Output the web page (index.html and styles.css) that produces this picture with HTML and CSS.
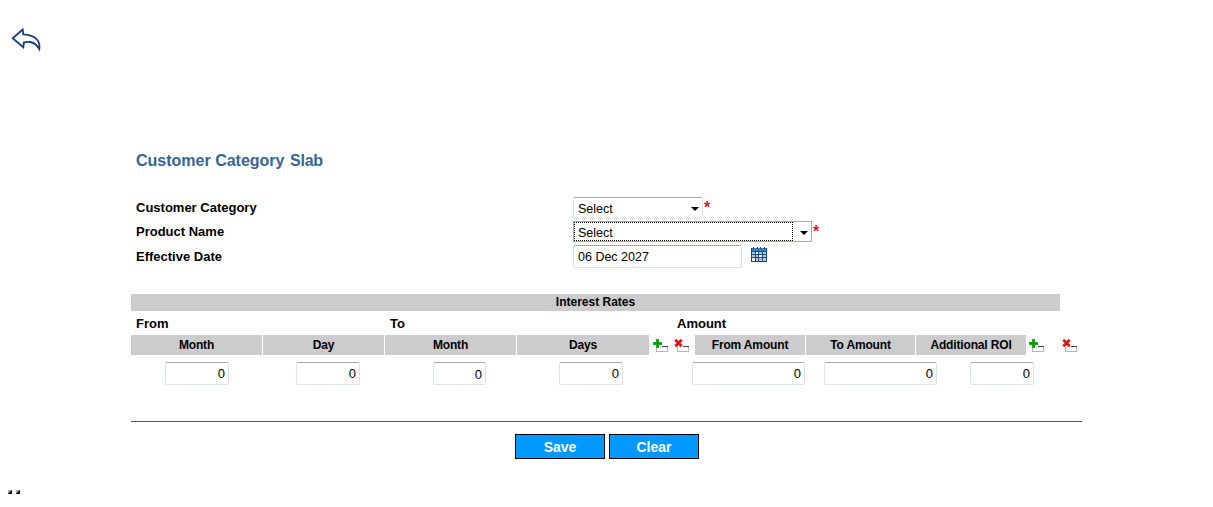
FILE: index.html
```html
<!DOCTYPE html>
<html lang="en">
<head>
  <meta charset="UTF-8" />
  <title>Customer Category Slab</title>
  <link rel="stylesheet" href="styles.css">
</head>
<body>
  <a class="back" href="#">
    <svg width="32" height="26" viewBox="0 0 32 26">
      <path d="M2.7 11.3 L12.7 2.5 L13.3 7.3 C19 7.6 24 9 27 12.5 C29.3 15 29.8 18.500 29.3 22 C27 18 24 15.500 20 15 C18 14.800 16 15 14 15.300 L13.300 20.300 Z" fill="#fff" stroke="#1b3a84" stroke-width="1.8" stroke-linejoin="miter"/>
    </svg>
  </a>

  <h2 class="title">Customer Category <span class="title-last">Slab</span></h2>

  <form class="details">
    <label class="field-label label-up">Customer Category</label>
    <div class="field">
      <div class="select-box select-short">
        <select class="select"><option>Select</option></select>
      </div>
      <span class="req">*</span>
    </div>

    <label class="field-label">Product Name</label>
    <div class="field">
      <div class="select-box select-long">
        <select class="select select-focus"><option>Select</option></select>
      </div>
      <span class="req">*</span>
    </div>

    <label class="field-label">Effective Date</label>
    <div class="field">
      <input class="input date" type="text" value="06 Dec 2027" />
      <svg class="cal" width="16" height="15" viewBox="0 0 16 15" shape-rendering="crispEdges">
        <rect x="0" y="1" width="16" height="14" fill="#1d4a7c"/>
        <rect x="1" y="1" width="14" height="3" fill="#3f7fc4"/>
        <path d="M2 0h1v2h-1z M6 0h1v2h-1z M9 0h1v2h-1z M13 0h1v2h-1z" fill="#1d4a7c"/>
        <path d="M1 5h3v2h-3z M5 5h2v2h-2z M8 5h3v2h-3z M12 5h3v2h-3z M1 8h3v2h-3z M5 8h2v2h-2z M8 8h3v2h-3z M12 8h3v2h-3z M1 11h3v3h-3z M5 11h2v3h-2z M8 11h3v3h-3z M12 11h3v3h-3z" fill="#a9cdf0"/>
        <path d="M5 5h2v2h-2z M8 8h3v2h-3z M1 11h3v3h-3z" fill="#fff"/>
      </svg>
    </div>
  </form>

  <section class="rates">
    <div class="band">Interest Rates</div>

    <div class="groups">
      <span class="group group-from">From</span>
      <span class="group group-to">To</span>
      <span class="group">Amount</span>
    </div>

    <div class="heads">
      <div class="head head-month">Month</div>
      <div class="head head-day">Day</div>
      <div class="head head-month">Month</div>
      <div class="head head-days">Days</div>
      <div class="tools tools-left">
        <svg class="tool" width="16" height="14" viewBox="0 0 16 14" shape-rendering="crispEdges"><use href="#tool-add"/></svg>
        <svg class="tool" width="16" height="14" viewBox="0 0 16 14" shape-rendering="crispEdges"><use href="#tool-del"/></svg>
      </div>
      <div class="head head-from">From Amount</div>
      <div class="head head-toamt">To Amount</div>
      <div class="head head-roi">Additional ROI</div>
      <div class="tools tools-right">
        <svg class="tool" width="16" height="14" viewBox="0 0 16 14" shape-rendering="crispEdges"><use href="#tool-add"/></svg>
        <svg class="tool" width="16" height="14" viewBox="0 0 16 14" shape-rendering="crispEdges"><use href="#tool-del"/></svg>
      </div>
    </div>

    <div class="values">
      <input class="input num num-a" type="text" value="0" />
      <input class="input num num-b" type="text" value="0" />
      <input class="input num num-c" type="text" value="0" />
      <input class="input num num-d" type="text" value="0" />
      <input class="input num num-e" type="text" value="0" />
      <input class="input num num-f" type="text" value="0" />
      <input class="input num num-g" type="text" value="0" />
    </div>
  </section>

  <hr class="rule" />

  <div class="actions">
    <button class="btn" type="button">Save</button>
    <button class="btn" type="button">Clear</button>
  </div>

  <div class="dots"><i class="dot"></i><i class="dot"></i></div>

  <svg width="0" height="0" class="defs">
    <g id="tool-box">
      <path d="M3 8h1v4h-1z M3 12h12v1h-12z M14 8h1v4h-1z" fill="#b5b5b5"/>
      <path d="M9 7h6v1h-6z" fill="#444"/>
    </g>
    <g id="tool-add">
      <use href="#tool-box"/>
      <path d="M3 0h3v3h3v3h-3v3h-3v-3h-3v-3h3z" fill="#1fae1f"/>
      <path d="M4 1h1v7h-1z M1 4h7v1h-7z" fill="#0f7f0f"/>
    </g>
    <g id="tool-del">
      <use href="#tool-box"/>
      <path d="M1.300 0.800L7.700 7.200M7.700 0.800L1.300 7.200" stroke="#e01414" stroke-width="2.800" fill="none" shape-rendering="geometricPrecision"/>
    </g>
  </svg>
</body>
</html>
```

FILE: styles.css
```css
body {
  margin: 0;
  height: 507px;
  overflow: hidden;
  background: #fff;
  color: #000;
  font-family: "Liberation Sans", Arial, sans-serif;
  font-size: 12px;
}
.back {
  display: block;
  width: 32px;
  height: 26px;
  margin: 27px 0 0 10px;
}
.back svg {
  display: block;
}
.title {
  margin: 99px 0 0 136px;
  font-size: 16px;
  line-height: 17px;
  font-weight: bold;
  color: #336699;
}
.title-last {
  margin-left: 1px;
  letter-spacing: -0.2px;
}
.details {
  display: grid;
  grid-template-columns: 437px auto;
  grid-template-rows: 22px 21px 24px;
  row-gap: 2px;
  margin: 28px 0 0 136px;
  align-items: center;
}
.field-label {
  font-size: 13px;
  font-weight: bold;
}
.label-up {
  padding-bottom: 2px;
}
.field {
  display: flex;
  align-items: flex-start;
  height: 100%;
}
.select-box {
  position: relative;
  height: 100%;
  box-sizing: border-box;
}
.select-box::after {
  content: "";
  position: absolute;
  top: 10px;
  right: 4px;
  border: 4px solid transparent;
  border-top: 4px solid #000;
  border-bottom: 0;
}
.select-short {
  width: 130px;
}
.select-long {
  width: 239px;
}
.select {
  appearance: none;
  display: block;
  width: 100%;
  height: 100%;
  margin: 0;
  padding: 2px 0 0 4px;
  box-sizing: border-box;
  background: #fff;
  border: 1px solid #dfe4ea;
  border-top-color: #a9a9a9;
  border-radius: 2px;
  font: 12.5px "Liberation Sans", Arial, sans-serif;
  color: #000;
}
.select-focus {
  border-color: #8cb4d8;
  border-radius: 0;
}
.select-long::before {
  content: "";
  position: absolute;
  top: 1px;
  left: 1px;
  bottom: 1px;
  width: 219px;
  border: 1px dotted #000;
  box-sizing: border-box;
  pointer-events: none;
  z-index: 1;
}
.req {
  color: #e8102a;
  font-size: 16px;
  font-weight: bold;
  line-height: 18px;
  margin-left: 1px;
  padding-top: 2px;
}
.input {
  display: block;
  box-sizing: border-box;
  height: 23px;
  margin: 0;
  background: #fff;
  border: 1px solid #dfe4ea;
  border-top-color: #a9a9a9;
  border-radius: 2px;
  font: 12.5px "Liberation Sans", Arial, sans-serif;
  color: #000;
  outline: none;
}
.date {
  width: 169px;
  margin-top: 1px;
  padding: 0 4px;
}
.cal {
  margin: 3px 0 0 9px;
}
.rates {
  margin: 26px 0 0 131px;
}
.band {
  width: 929px;
  height: 17px;
  background: #cccccc;
  font-size: 12px;
  font-weight: bold;
  line-height: 16px;
  text-align: center;
}
.groups {
  display: flex;
  height: 24px;
  align-items: center;
  padding-left: 5px;
}
.group {
  font-size: 13px;
  font-weight: bold;
}
.group-from {
  width: 254px;
}
.group-to {
  width: 287px;
}
.heads {
  display: flex;
  height: 20px;
  align-items: stretch;
  column-gap: 1px;
}
.head {
  background: #cccccc;
  font-size: 12px;
  letter-spacing: -0.15px;
  font-weight: bold;
  line-height: 20px;
  text-align: center;
}
.head-month {
  width: 131px;
}
.head-day {
  width: 121px;
}
.head-days {
  width: 132px;
}
.head-from {
  width: 110px;
}
.head-toamt {
  width: 109px;
}
.head-roi {
  width: 110px;
}
.tools {
  display: flex;
  align-items: flex-start;
  padding-top: 4px;
  box-sizing: border-box;
}
.tools-left {
  width: 44px;
  padding-left: 3px;
  column-gap: 5px;
}
.tools-right {
  padding-left: 2px;
  column-gap: 17px;
}
.tool {
  display: block;
}
.values {
  display: flex;
  margin-top: 7px;
  padding-left: 34px;
}
.num {
  width: 64px;
  padding: 0 3px;
  font-size: 13px;
  text-align: right;
}
.num-b {
  margin-left: 67px;
}
.num-c {
  width: 53px;
  margin-left: 73px;
  padding-top: 2px;
}
.num-d {
  margin-left: 73px;
}
.num-e {
  width: 113px;
  margin-left: 69px;
}
.num-f {
  width: 113px;
  margin-left: 19px;
}
.num-g {
  margin-left: 33px;
}
.rule {
  width: 951px;
  height: 1px;
  margin: 36px 0 0 131px;
  border: 0;
  background: #555;
}
.actions {
  display: flex;
  justify-content: flex-start;
  column-gap: 4px;
  margin: 12px 0 0 515px;
}
.btn {
  width: 90px;
  height: 25px;
  padding: 0;
  background: #0099ff;
  border: 1px solid #000;
  color: #fff;
  font: bold 14px "Liberation Sans", Arial, sans-serif;
}
.dots {
  display: flex;
  column-gap: 4px;
  margin: 31px 0 0 8px;
}
.dot {
  display: block;
  width: 4px;
  height: 4px;
  background: linear-gradient(135deg, #bbb 30%, #111 60%);
}
.defs {
  display: block;
  height: 0;
}
```
